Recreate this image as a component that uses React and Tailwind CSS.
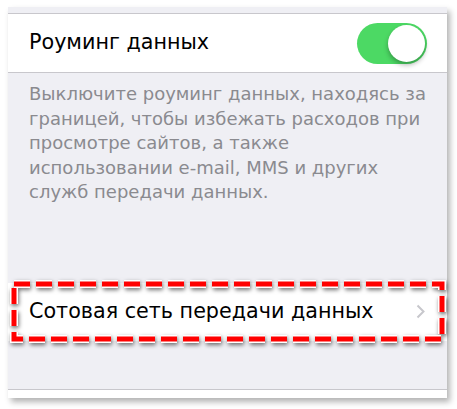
import React from "react";

function Toggle() {
  return (
    <div className="relative h-[41px] w-[70px] rounded-full bg-[#4cd964]">
      <div className="absolute right-[2px] top-[2px] h-[37px] w-[37px] rounded-full bg-white shadow-[0_3px_5px_rgba(0,0,0,0.3)]" />
    </div>
  );
}

// Red dashed highlight drawn around the cellular data row
function DashedFrame() {
  const w = 436;
  const h = 63;
  const d = `M4 4 H${w - 4} V${h - 4} H4 Z`;
  return (
    <svg
      width={w}
      height={h}
      className="pointer-events-none absolute left-[2px] top-[-3px] overflow-visible drop-shadow-[1px_2px_2px_rgba(0,0,0,0.55)]"
    >
      <path d={d} fill="none" stroke="#ffffff" strokeWidth="8" strokeDasharray="16 6" />
      <path d={d} fill="none" stroke="#ff0000" strokeWidth="5" strokeDasharray="16 6" />
    </svg>
  );
}

export default function App() {
  return (
    <div className="h-[409px] w-[457px] bg-white pl-[8px] pt-[7px] font-['DejaVu_Sans',Arial,sans-serif]">
      <div className="flex w-[439px] flex-col bg-[#efeff4] shadow-[3px_4px_6px_rgba(0,0,0,0.3)]">
        <div className="h-[7px] border-b border-[#c8c7cc]" />
        <div className="flex h-[59px] items-center justify-between border-b border-[#c8c7cc] bg-white pl-[21px] pr-[20px]">
          <span className="text-[20.7px] text-black">Роуминг данных</span>
          <Toggle />
        </div>
        <p className="whitespace-nowrap pl-[21px] pt-[9px] text-[18px] leading-[24.5px] text-[#8a8a8f]">
          Выключите роуминг данных, находясь за
          <br />
          границей, чтобы избежать расходов при
          <br />
          просмотре сайтов, а также
          <br />
          использовании e-mail, MMS и других
          <br />
          служб передачи данных.
        </p>
        <div className="h-[78px]" />
        <div className="relative flex h-[58px] items-center justify-between bg-white pl-[21px] pr-[22px]">
          <span className="text-[20.7px] text-black">Сотовая сеть передачи данных</span>
          <svg width="9" height="15" viewBox="0 0 9 15" className="text-[#c7c7cc]">
            <path d="M1.5 1.5 L7.5 7.5 L1.5 13.5" fill="none" stroke="currentColor" strokeWidth="2" />
          </svg>
          <DashedFrame />
        </div>
        <div className="h-[49px] border-b border-[#c8c7cc]" />
        <div className="h-[8px] bg-white" />
      </div>
    </div>
  );
}
